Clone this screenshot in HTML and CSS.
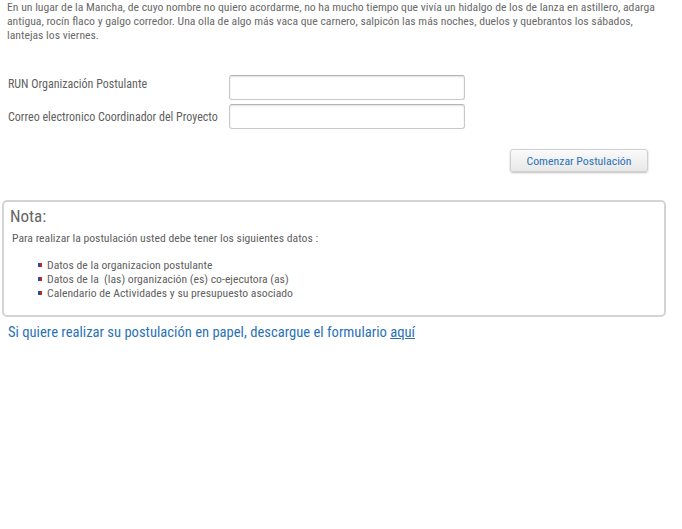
FILE: index.html
```html
<!DOCTYPE html>
<html lang="es">
<head>
<meta charset="utf-8">
<link rel="stylesheet" href="styles.css">
</head>
<body>
<div class="page">
  <p class="intro">En un lugar de la Mancha, de cuyo nombre no quiero acordarme, no ha mucho tiempo que vivía un hidalgo de los de lanza en astillero, adarga antigua, rocín flaco y galgo corredor. Una olla de algo más vaca que carnero, salpicón las más noches, duelos y quebrantos los sábados, lantejas los viernes.</p>

  <form class="form">
    <div class="row row-first">
      <label class="label">RUN Organización Postulante</label>
      <input class="input" type="text">
    </div>
    <div class="row">
      <label class="label">Correo electronico Coordinador del Proyecto</label>
      <input class="input" type="text">
    </div>
    <div class="actions">
      <button type="button" class="btn">Comenzar Postulación</button>
    </div>
  </form>

  <div class="nota">
    <h3 class="nota-title">Nota:</h3>
    <p class="nota-text">Para realizar la postulación usted debe tener los siguientes datos :</p>
    <ul class="nota-list">
      <li>Datos de la organizacion postulante</li>
      <li>Datos de la&nbsp; (las) organización (es) co-ejecutora (as)</li>
      <li>Calendario de Actividades y su presupuesto asociado</li>
    </ul>
  </div>

  <p class="papel">Si quiere realizar su postulación en papel, descargue el formulario <a href="#" class="link">aquí</a></p>
</div>
</body>
</html>
```
FILE: styles.css
```css
html, body {
  margin: 0;
  padding: 0;
  background: #fff;
}
body {
  font-family: "Liberation Sans Narrow", "Roboto Condensed", "Open Sans", sans-serif;
  color: #5f5f5f;
}
.page {
  padding: 0 16px 0 2px;
}
.intro {
  margin: 0;
  padding: 0 0 0 5px;
  font-size: 11.7px;
  line-height: 14px;
  color: #6a6a6a;
}
.form {
  margin: 33px 0 0 0;
  padding-left: 6px;
}
.row {
  display: flex;
  align-items: center;
  height: 25px;
  margin-bottom: 4px;
}
.row-first .label {
  margin-bottom: 8px;
}
.label {
  width: 221px;
  font-size: 12px;
  color: #5f5f5f;
}
.input {
  width: 236px;
  height: 25px;
  box-sizing: border-box;
  border: 1px solid #c8c8c8;
  border-top-color: #b4b4b4;
  border-radius: 3px;
  box-shadow: inset 0 1px 2px rgba(0,0,0,0.12);
  background: #fff;
  margin: 0;
  padding: 0 4px;
}
.actions {
  display: flex;
  justify-content: flex-end;
  padding-right: 18px;
  margin-top: 20px;
}
.btn {
  width: 138px;
  height: 23px;
  border: 1px solid #d0d0d0;
  border-radius: 3px;
  background: linear-gradient(#fafafa, #e8e8e8);
  box-shadow: 0 1px 2px rgba(0,0,0,0.25);
  color: #2a72b5;
  font-family: inherit;
  font-size: 11.8px;
  padding: 0;
}
.nota {
  margin-top: 28px;
  border: 2px solid #d4d4d4;
  border-radius: 5px;
  height: 117px;
  box-sizing: border-box;
  padding: 4px 8px 4px 6px;
}
.nota-title {
  margin: 0;
  font-weight: normal;
  font-size: 17px;
  line-height: 20px;
  color: #666;
}
.nota-text {
  margin: 5px 0 0 2px;
  font-size: 11.7px;
  line-height: 14px;
  color: #5f5f5f;
}
.nota-list {
  list-style: none;
  margin: 13px 0 0 0;
  padding: 0 0 0 28px;
  font-size: 11.7px;
  line-height: 14px;
  color: #5f5f5f;
}
.nota-list li {
  display: flex;
  align-items: center;
  gap: 5px;
}
.nota-list li::before {
  content: "";
  width: 4px;
  height: 4px;
  background: linear-gradient(90deg, #1f4fa8 50%, #d0202a 50%);
  flex: none;
}
.papel {
  margin: 6px 0 0 6px;
  font-size: 14.6px;
  line-height: 18px;
  color: #2a72b5;
}
.link {
  color: #2a72b5;
  text-decoration: underline;
}
```
